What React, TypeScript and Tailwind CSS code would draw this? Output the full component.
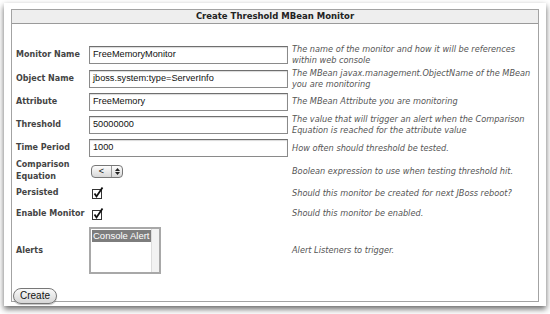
import React from 'react';

const rows = [
  {
    label: 'Monitor Name',
    value: 'FreeMemoryMonitor',
    desc: ['The name of the monitor and how it will be references', 'within web console'],
    h: 'h-[24px]',
  },
  {
    label: 'Object Name',
    value: 'jboss.system:type=ServerInfo',
    desc: ['The MBean javax.management.ObjectName of the MBean', 'you are monitoring'],
    h: 'h-[24px]',
  },
  {
    label: 'Attribute',
    value: 'FreeMemory',
    desc: ['The MBean Attribute you are monitoring'],
    h: 'h-[22px]',
  },
  {
    label: 'Threshold',
    value: '50000000',
    desc: ['The value that will trigger an alert when the Comparison', 'Equation is reached for the attribute value'],
    h: 'h-[24px]',
  },
  {
    label: 'Time Period',
    value: '1000',
    desc: ['How often should threshold be tested.'],
    h: 'h-[23px]',
  },
];

const Check = () => (
  <svg width="12" height="12" viewBox="0 0 12 12" className="block">
    <rect x="0.5" y="2.5" width="9" height="9" fill="#fff" stroke="#333" strokeWidth="1" />
    <path d="M2.5 6.5 L4.5 9.5 L10.5 0.5" fill="none" stroke="#111" strokeWidth="1.8" />
  </svg>
);

const Desc: React.FC<{ lines: string[] }> = ({ lines }) => (
  <div className="italic text-[8.2px] leading-[11px] text-[#555] whitespace-nowrap">
    {lines.map((l) => (
      <div key={l}>{l}</div>
    ))}
  </div>
);

const App: React.FC = () => {
  return (
    <div className="w-[550px] h-[314px] bg-white pt-[3px] pl-[4px] pr-[4px] pb-[8px] font-['DejaVu_Sans',sans-serif]">
      <div className="h-full bg-white shadow-[0_3px_6px_rgba(0,0,0,0.6)] pt-[6px] px-[7px] pb-[4px]">
        <div className="h-full border border-[#a3a3a3] flex flex-col">
          {/* Header */}
          <div className="h-[18px] bg-[#eeeeee] border-b border-[#9a9a9a] flex items-center justify-center text-[8.5px] font-bold text-[#222]">
            Create Threshold MBean Monitor
          </div>

          <div className="pt-[19px] pl-[4px]">
            {rows.map((r) => (
              <div key={r.label} className={`flex items-center ${r.h}`}>
                <div className="w-[73px] text-[8px] font-bold text-[#444]">{r.label}</div>
                <div className="w-[203px]">
                  <div className="w-[199px] h-[18px] border border-[#8a8a8a] border-t-[#6f6f6f] bg-white flex items-center pl-[3px] text-[9.2px] text-[#111] font-['Liberation_Sans',sans-serif] shadow-[inset_0_1px_1px_rgba(0,0,0,0.15)]">
                    {r.value}
                  </div>
                </div>
                <Desc lines={r.desc} />
              </div>
            ))}

            {/* Comparison */}
            <div className="flex items-center h-[23px]">
              <div className="w-[73px] text-[8px] font-bold text-[#444] leading-[12px]">
                Comparison
                <br />
                Equation
              </div>
              <div className="w-[203px]">
                <div className="ml-[2px] w-[32px] h-[13px] rounded-[4px] border border-[#777] bg-gradient-to-b from-[#fdfdfd] to-[#d8d8d8] flex items-center text-[9px] text-[#111] font-['Liberation_Sans',sans-serif]">
                  <span className="w-[19px] text-center leading-none">&lt;</span>
                  <span className="h-full border-l border-[#999] flex-1 flex flex-col items-center justify-center gap-[1px]">
                    <svg width="5" height="3" viewBox="0 0 5 3"><path d="M0 3 L2.5 0 L5 3Z" fill="#222" /></svg>
                    <svg width="5" height="3" viewBox="0 0 5 3"><path d="M0 0 L2.5 3 L5 0Z" fill="#222" /></svg>
                  </span>
                </div>
              </div>
              <Desc lines={['Boolean expression to use when testing threshold hit.']} />
            </div>

            {/* Persisted */}
            <div className="flex items-center h-[21px]">
              <div className="w-[73px] text-[8px] font-bold text-[#444]">Persisted</div>
              <div className="w-[203px] pl-[3px]">
                <Check />
              </div>
              <Desc lines={['Should this monitor be created for next JBoss reboot?']} />
            </div>

            {/* Enable */}
            <div className="flex items-center h-[20px]">
              <div className="w-[73px] text-[8px] font-bold text-[#444]">Enable Monitor</div>
              <div className="w-[203px] pl-[3px]">
                <Check />
              </div>
              <Desc lines={['Should this monitor be enabled.']} />
            </div>

            {/* Alerts */}
            <div className="flex items-center h-[54px]">
              <div className="w-[73px] text-[8px] font-bold text-[#444]">Alerts</div>
              <div className="w-[203px]">
                <div className="w-[72px] h-[47px] border-2 border-[#a8a8a8] bg-white flex">
                  <div className="flex-1 pt-[1px] pl-[1px] min-w-0">
                    <div className="bg-[#7d7d7d] text-white text-[9.5px] leading-[12px] pl-[1px] whitespace-nowrap overflow-hidden font-['Liberation_Sans',sans-serif]">
                      Console Alert
                    </div>
                  </div>
                  <div className="w-[8px] bg-[#f2f2f2] border-l border-[#dcdcdc]" />
                </div>
              </div>
              <Desc lines={['Alert Listeners to trigger.']} />
            </div>
          </div>

          {/* Button */}
          <div className="pl-[1px] pt-[4px]">
            <button className="h-[16px] px-[6px] rounded-full border border-[#777] bg-gradient-to-b from-[#fafafa] to-[#d6d6d6] text-[10px] leading-none text-[#111] font-['Liberation_Sans',sans-serif] shadow-[0_1px_1px_rgba(0,0,0,0.25)]">
              Create
            </button>
          </div>
        </div>
      </div>
    </div>
  );
};

export default App;
